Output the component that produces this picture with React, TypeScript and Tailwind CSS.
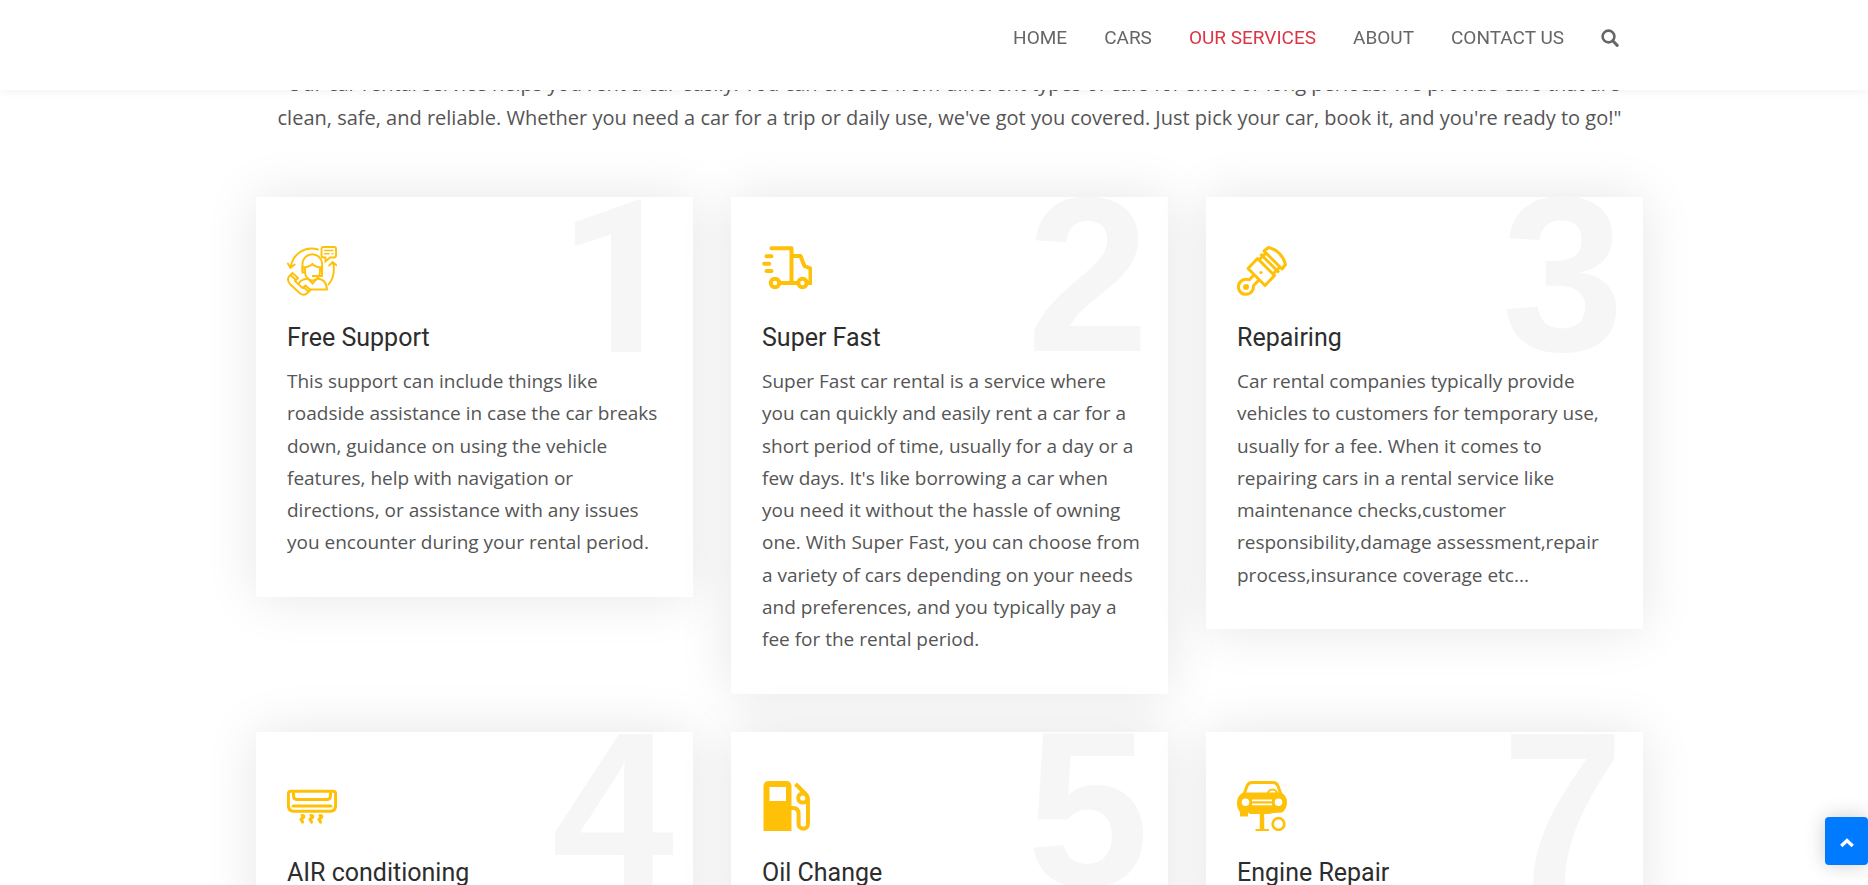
import type { ReactNode } from "react";

const navLinks = [
  { label: "HOME", active: false },
  { label: "CARS", active: false },
  { label: "OUR SERVICES", active: true },
  { label: "ABOUT", active: false },
  { label: "CONTACT US", active: false },
];

function SupportIcon() {
  return (
    <svg viewBox="0 0 50 50" className="size-[50px]" fill="none" stroke="currentColor" strokeWidth="1.9" aria-hidden="true">
      <path d="M31 3.500C18-.2 6 8 4 20M.8 17.500l2.700 4.300 4.200-3.300" strokeLinecap="round" />
      <path d="M41.500 38.500c6-7 6.200-14 4.700-22M42.300 19.500l3.400-3.500 3.800 3.200" strokeLinecap="round" />
      <path d="M36.500 1h10.500q2 0 2 2v6.500q0 2-2 2h-4l-4.500 4v-4h-2q-2 0-2-2V3q0-2 2-2z" />
      <path d="M37 4.500h9.500M37 7.800h5.500M44.500 7.800h2" strokeWidth="1.500" />
      <path d="M15.500 26V18a9.800 9.800 0 0 1 19.600 0v8M16 21.500c4 0 6.500-1 9.500-3.500 2.500 2.500 5.500 3.500 9.500 3.500" />
      <path d="M18 22v4c0 5 3.500 8.500 7.500 8.500S33 31 33 26v-4M15.500 20v6.500h2.500M33 22h2v8h-10" />
      <path d="M12 38c0-3 3-4.500 9-5.500l4.500 5 4.500-5c7 1 9.500 4 10 11H22" />
      <path d="M5.500 27L2 30.500c-2 2.500-1 5 1 7.500l9.500 9c2.500 2 5.500 2.500 8 0l3-3-5-4.500-3 2.500L8 35l3-3zM3.500 29l5.500 5M16.500 41l5.500 5" />
    </svg>
  );
}

function TruckIcon() {
  return (
    <svg viewBox="0 0 50 50" className="size-[50px]" fill="none" stroke="currentColor" strokeWidth="4" strokeLinecap="round" strokeLinejoin="round" aria-hidden="true">
      <path d="M9.500 2.200h20v33M18 37h17M29.500 10h9l4 10 6 2.500v14.500h-3" />
      <path d="M4.500 10.300h5M2.200 17.800h5M4.500 25h5" />
      <circle cx="13" cy="37" r="4.200" />
      <circle cx="40.500" cy="37" r="4.200" />
    </svg>
  );
}

function PistonIcon() {
  return (
    <svg viewBox="0 0 50 50" className="size-[50px]" fill="none" stroke="currentColor" strokeWidth="3" strokeLinejoin="round" aria-hidden="true">
      <path d="M31.500 1.500C40 3.500 46.500 10 48.500 18.500L45 23 27 5z" />
      <path d="M23.500 8L42 26.500M29 7l-7 7M43 21l-7 7" />
      <path d="M20.500 12.500l17 17-9.500 10-17-17z" />
      <path d="M17 29l-5.500 5.500M22 34l-5.500 5.500" />
      <path d="M12 34a7.500 7.500 0 1 0 4.200 5" />
      <circle cx="9" cy="41" r="3" fill="currentColor" stroke="none" />
      <circle cx="24" cy="26.500" r="1.600" fill="currentColor" stroke="none" />
    </svg>
  );
}

function AirConditionerIcon() {
  return (
    <svg viewBox="0 1 50 50" className="size-[50px]" fill="none" stroke="currentColor" strokeWidth="3" strokeLinecap="round" aria-hidden="true">
      <path d="M4 11.200h42q2.600 0 2.600 2.600v11.500q0 6-6 6H7.400q-6 0-6-6V13.800q0-2.600 2.600-2.600z" />
      <path d="M6.500 11.500v4q0 4 4 4h29q4 0 4-4v-4M6 26h38" />
      <path d="M15 35.500c3 .5 2 2-.3 3.200s1.500 1.800.800 3.500M24 35.500c3 .5 2 2-.3 3.200s1.500 1.800.800 3.500M33 35.500c3 .5 2 2-.3 3.200s1.500 1.800.800 3.500" strokeWidth="3" />
    </svg>
  );
}

function FuelPumpIcon() {
  return (
    <svg viewBox="0 0 50 50" className="size-[50px]" fill="none" stroke="currentColor" strokeWidth="4" aria-hidden="true">
      <path d="M7 0h17q5.500 0 5.500 5.500V50H1.500V5.500Q1.500 0 7 0zM7.500 6v14h16.500V6z" fill="currentColor" fillRule="evenodd" stroke="none" />
      <path d="M33.500 3l10 10c2.200 2.200 2.500 3.500 2.500 6v24a4.700 4.700 0 0 1-9.400 0V33q0-6-5.500-6h-2" />
      <circle cx="40.800" cy="17" r="4.600" />
    </svg>
  );
}

function CarLiftIcon() {
  return (
    <svg viewBox="0 0 50 50" className="size-[50px]" fill="none" stroke="currentColor" aria-hidden="true">
      <path d="M7 13.500l3-8.500q1.500-3.500 5-3.500h21q3.500 0 5 3.500l3 8.500" strokeWidth="3" />
      <path d="M31 13a4.500 4.500 0 0 1 9 0" strokeWidth="2.200" />
      <path fillRule="evenodd" d="M6 11.500h38q6 3 6 9.500 0 7-5 10.500l-9 .500-4 1H13l-2-1.500v4H3V31q-3-3-3-9.500t6-10zM8.500 17.500a3.800 3.800 0 1 0 0 7.600 3.800 3.800 0 0 0 0-7.600zM41.500 17.500a3.800 3.800 0 1 0 0 7.600 3.800 3.800 0 0 0 0-7.600zM15 18.500v1.800h20v-1.800zM15 22.500v1.800h20v-1.800z" fill="currentColor" stroke="none" />
      <path d="M25 32v16" strokeWidth="4.500" />
      <path d="M18.500 49H32" strokeWidth="2" />
      <circle cx="41.500" cy="43" r="5.800" strokeWidth="2.700" />
    </svg>
  );
}

type Service = { number: number; title: string; text?: string; icon: ReactNode };

const services: Service[] = [
  {
    number: 1,
    title: "Free Support",
    text: "This support can include things like roadside assistance in case the car breaks down, guidance on using the vehicle features, help with navigation or directions, or assistance with any issues you encounter during your rental period.",
    icon: <SupportIcon />,
  },
  {
    number: 2,
    title: "Super Fast",
    text: "Super Fast car rental is a service where you can quickly and easily rent a car for a short period of time, usually for a day or a few days. It's like borrowing a car when you need it without the hassle of owning one. With Super Fast, you can choose from a variety of cars depending on your needs and preferences, and you typically pay a fee for the rental period.",
    icon: <TruckIcon />,
  },
  {
    number: 3,
    title: "Repairing",
    text: "Car rental companies typically provide vehicles to customers for temporary use, usually for a fee. When it comes to repairing cars in a rental service like maintenance checks,customer responsibility,damage assessment,repair process,insurance coverage etc...",
    icon: <PistonIcon />,
  },
  { number: 4, title: "AIR conditioning", icon: <AirConditionerIcon /> },
  { number: 5, title: "Oil Change", icon: <FuelPumpIcon /> },
  { number: 7, title: "Engine Repair", icon: <CarLiftIcon /> },
];

function ServiceCard({ number, title, text, icon }: Service) {
  const numeralStyle =
    number === 1
      ? "top-1 right-[13px] font-[Roboto,sans-serif] text-[214px]"
      : "top-0 right-[19px] font-['Liberation_Sans',sans-serif] text-[220px]";

  return (
    <article className="relative bg-white pt-[49px] pr-[27px] pb-[38px] pl-[31px] shadow-[0_0_50px_rgba(0,0,0,0.1)]">
      <span aria-hidden="true" className={`absolute leading-[156px] font-bold text-[#f6f6f6] ${numeralStyle}`}>
        {number}
      </span>
      <div className="relative">
        <div className="text-[#ffc107]">{icon}</div>
        <h3 className="mt-[27px] font-[Roboto,sans-serif] text-[25px] leading-[30px] text-[#2d2d2d]">{title}</h3>
        {text && <p className="mt-3 text-[19px] leading-[1.7]">{text}</p>}
      </div>
    </article>
  );
}

export default function App() {
  return (
    <div className="h-screen overflow-x-hidden overflow-y-auto bg-white font-['Open_Sans',sans-serif] text-[#555] [scrollbar-width:none]">
      <header className="sticky top-0 z-10 bg-white pl-[31px] shadow-[0_0_10px_rgba(0,0,0,0.07)]">
        <nav aria-label="Main" className="mx-auto flex h-[90px] max-w-[1387px] items-start justify-end gap-[37px] pt-[26px] pr-6 font-[Roboto,sans-serif] text-[19px] leading-6">
          {navLinks.map((link) => (
            <a key={link.label} href="#" className={link.active ? "text-[#dc3545]" : "text-[#666]"}>
              {link.label}
            </a>
          ))}
          <button type="button" aria-label="Search" className="flex h-6 items-center text-[#666]">
            <svg viewBox="0 0 18 18" className="size-[18px]" fill="none" stroke="currentColor" strokeWidth="2.600" aria-hidden="true">
              <circle cx="7.500" cy="7.500" r="5.900" />
              <path d="M11.800 11.800l4.400 4.600" strokeWidth="3" strokeLinecap="round" />
            </svg>
          </button>
        </nav>
      </header>
      <main className="-mt-[23px] pl-[31px]">
        <div className="mx-auto max-w-[1387px]">
          <p className="text-center text-xl leading-[34px]">
            "Our car rental service helps you rent a car easily. You can choose from different types of cars for short or long periods. We provide cars that are clean, safe, and reliable. Whether you need a car for a trip or daily use, we've got you covered. Just pick your car, book it, and you're ready to go!"
          </p>
          <div className="mt-[62px] grid grid-cols-3 items-start gap-[38px]">
            {services.map((service) => (
              <ServiceCard key={service.number} {...service} />
            ))}
          </div>
        </div>
      </main>
      <button
        type="button"
        aria-label="Back to top"
        className="fixed right-0 bottom-5 z-20 flex h-12 w-[43px] items-center justify-center rounded bg-[#007bff] text-white shadow-[0_0_20px_rgba(0,0,0,0.2)]"
      >
        <svg viewBox="0 0 14 10" className="mt-1 h-[10px] w-[14px]" fill="none" stroke="currentColor" strokeWidth="3.400" aria-hidden="true">
          <path d="M1.300 8L7 2.500 12.700 8" />
        </svg>
      </button>
    </div>
  );
}
